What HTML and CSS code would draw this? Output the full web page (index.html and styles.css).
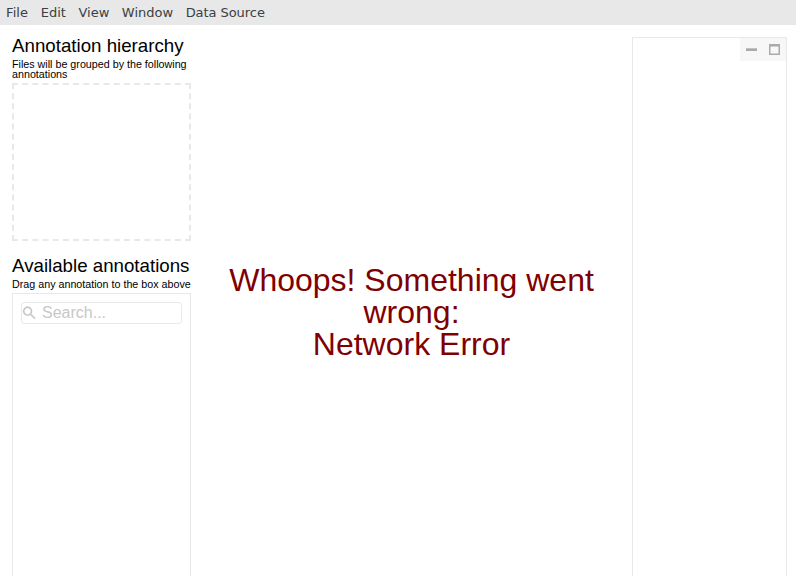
FILE: index.html
```html
<!DOCTYPE html>
<html lang="en">
<head>
<meta charset="utf-8">
<title>File Explorer</title>
<link rel="stylesheet" href="styles.css">
</head>
<body>
<nav class="menu"><span class="file">File</span><span>Edit</span><span>View</span><span>Window</span><span class="source">Data Source</span></nav>
<main class="content">
  <aside class="sidebar">
    <section class="hierarchy">
      <h1>Annotation hierarchy</h1>
      <p>Files will be grouped by the following annotations</p>
      <div class="drop-zone"></div>
    </section>
    <section class="available">
      <h1>Available annotations</h1>
      <p>Drag any annotation to the box above</p>
      <div class="list">
        <label class="search">
          <svg width="16" height="16" viewBox="1.6 0.8 22.5 22.5"><path d="M15.5 14h-.79l-.28-.27A6.471 6.471 0 0 0 16 9.5 6.5 6.5 0 1 0 9.5 16c1.61 0 3.09-.59 4.23-1.57l.27.28v.79l5 4.99L20.49 19l-4.99-5zm-6 0C7.01 14 5 11.99 5 9.5S7.01 5 9.5 5 14 7.01 14 9.5 11.99 14 9.5 14z"/></svg>
          <input type="text" placeholder="Search...">
        </label>
      </div>
    </section>
  </aside>
  <section class="error">Whoops! Something went wrong:<br>Network Error</section>
  <aside class="details">
    <div class="controls">
      <svg width="11" height="11" viewBox="0 0 11 11"><path d="M0 4.3h11V7H0z"/></svg>
      <svg width="11" height="11" viewBox="0 0 11 11"><path fill-rule="evenodd" d="M0 0h11v11H0zM1.5 2.6v6.9h8V2.6z"/></svg>
    </div>
  </aside>
</main>
</body>
</html>
```

FILE: styles.css
```css
* { box-sizing: border-box; }
body {
  margin: 0;
  height: 100vh;
  overflow: hidden;
  display: flex;
  flex-direction: column;
  background: #fff;
  color: #000;
  font-family: "Liberation Sans", Arial, sans-serif;
}
.menu {
  flex: none;
  display: flex;
  gap: 12.55px;
  height: 25px;
  padding: 0 6px;
  background: #e8e8e8;
  color: #3c4043;
  font: 13px/25px "DejaVu Sans", sans-serif;
}
.file { letter-spacing: .1px; }
.source { letter-spacing: -.06px; }
.content { flex: 1; min-height: 0; display: flex; }
.sidebar {
  flex: none;
  width: 191px;
  padding: 12px 0 0 12px;
  display: flex;
  flex-direction: column;
}
h1 { margin: 0; font-size: 18.72px; font-weight: 400; line-height: 18px; white-space: nowrap; }
p { margin: 4px 0; font-size: 10.72px; line-height: 10px; }
.drop-zone { height: 158px; border: 2px dashed #e8e8e8; }
.hierarchy { flex: none; }
.available { flex: 1; display: flex; flex-direction: column; margin-top: 16px; }
.list { flex: 1; padding: 8px; border: 1px solid #e8e8e8; border-bottom: 0; }
.search {
  display: flex;
  align-items: center;
  height: 22px;
  border: 1px solid #e8e8e8;
  border-radius: 3px;
}
.search svg { flex: none; fill: #c4c4c4; stroke: #c4c4c4; stroke-width: .2; }
.search input {
  min-width: 0;
  flex: 1;
  padding: 0 0 0 4px;
  border: 0;
  background: none;
  font: 16px/20px "Liberation Sans", sans-serif;
}
.search input::placeholder { color: #c8c8c8; }
.error {
  flex: 1;
  align-self: center;
  padding: 0 17px;
  margin-top: 22px;
  color: #800000;
  font-size: 32px;
  line-height: 32px;
  text-align: center;
}
.details {
  flex: none;
  width: 155px;
  margin: 12px 9px 0 0;
  border: 1px solid #e8e8e8;
  border-bottom: 0;
}
.controls {
  display: flex;
  align-items: center;
  gap: 12px;
  width: 46px;
  height: 23px;
  margin-left: auto;
  padding-left: 6px;
  background: #f7f7f7;
  fill: #aaa;
}
```
